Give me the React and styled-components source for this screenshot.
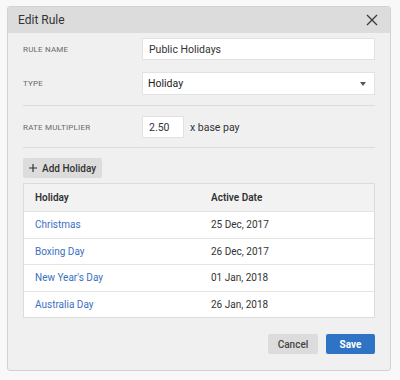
import React from 'react';
import styled, { createGlobalStyle } from 'styled-components';

const GlobalStyle = createGlobalStyle`
  html, body {
    margin: 0;
    padding: 0;
    background: #f8f8f8;
    font-family: Roboto, 'Noto Sans', sans-serif;
    color: #333;
  }
  * { box-sizing: border-box; }
`;

const Page = styled.div`
  padding: 6px 9px 0 7px;
`;

const Dialog = styled.div`
  width: 384px;
  background: #f0f0f0;
  border: 1px solid #d2d2d2;
  border-radius: 3px;
  overflow: hidden;
`;

const Header = styled.div`
  display: flex;
  align-items: center;
  justify-content: space-between;
  height: 26px;
  padding: 0 11px 0 10px;
  background: #dcdcdc;
  font-size: 12px;
  color: #333;
`;

const CloseButton = styled.button`
  display: flex;
  align-items: center;
  justify-content: center;
  width: 14px;
  height: 14px;
  padding: 0;
  border: none;
  background: none;
  cursor: pointer;
`;

const Body = styled.div`
  padding: 5px 15px 16px;
`;

const Section = styled.div`
  display: flex;
  flex-direction: column;
  gap: 12px;
  padding: ${p => p.$first ? '0 0 11px' : '10px 0 9px'};
  border-bottom: 1px solid #dcdcdc;
`;

const FieldRow = styled.div`
  display: grid;
  grid-template-columns: 119px 1fr;
  align-items: center;
  height: 22px;
`;

const Label = styled.div`
  font-size: 8px;
  letter-spacing: 0.2px;
  text-transform: uppercase;
  color: #6a6a6a;
`;

const TextInput = styled.div`
  display: flex;
  align-items: center;
  height: 22px;
  width: ${p => p.$width || '100%'};
  padding: 0 6px;
  background: #fff;
  border: 1px solid #e2e2e2;
  font-size: 10.5px;
  color: #333;
`;

const Select = styled(TextInput)`
  justify-content: space-between;
  padding: 0 8px 0 5px;
  height: 23px;
  color: #222;
`;

const Caret = styled.span`
  width: 0;
  height: 0;
  border-left: 3.5px solid transparent;
  border-right: 3.5px solid transparent;
  border-top: 4px solid #555;
`;

const InlineGroup = styled.div`
  display: flex;
  align-items: center;
  gap: 6px;
  font-size: 10.5px;
  color: #333;
`;

const AddButton = styled.button`
  display: inline-flex;
  align-items: center;
  gap: 5px;
  height: 20px;
  margin: 10px 0 5px;
  padding: 0 6px;
  border: none;
  border-radius: 2px;
  background: #dcdcdc;
  font-family: inherit;
  font-size: 10px;
  font-weight: 500;
  color: #333;
`;

const Table = styled.div`
  border: 1px solid #dcdcdc;
  background: #fff;
`;

const Row = styled.div`
  display: grid;
  grid-template-columns: 176px 1fr;
  align-items: center;
  height: ${p => p.$head ? '27px' : '26.5px'};
  padding: 0 11px;
  background: ${p => p.$head ? '#f2f2f2' : '#fff'};
  border-top: ${p => p.$head ? 'none' : '1px solid #e4e4e4'};
  font-size: 10px;
  font-weight: ${p => p.$head ? 600 : 400};
  color: #333;
`;

const HolidayLink = styled.a`
  color: #3b6fc2;
  text-decoration: none;
`;

const Footer = styled.div`
  display: flex;
  justify-content: flex-end;
  gap: 8px;
  margin-top: 16px;
`;

const Button = styled.button`
  height: 20px;
  width: ${p => p.$primary ? '49px' : '50px'};
  border: none;
  border-radius: 2px;
  background: ${p => p.$primary ? '#2f73c5' : '#dcdcdc'};
  color: ${p => p.$primary ? '#fff' : '#444'};
  font-family: inherit;
  font-size: 10px;
  font-weight: ${p => p.$primary ? 700 : 500};
`;

const holidays = [
  { name: 'Christmas', date: '25 Dec, 2017' },
  { name: 'Boxing Day', date: '26 Dec, 2017' },
  { name: "New Year's Day", date: '01 Jan, 2018' },
  { name: 'Australia Day', date: '26 Jan, 2018' },
];

export default function App() {
  return (
    <>
      <GlobalStyle />
      <Page>
        <Dialog>
          <Header>
            <span>Edit Rule</span>
            <CloseButton aria-label="Close">
              <svg width="12" height="12" viewBox="0 0 12 12">
                <path d="M1 1 L11 11 M11 1 L1 11" stroke="#3a3a3a" strokeWidth="1.3" />
              </svg>
            </CloseButton>
          </Header>
          <Body>
            <Section $first>
              <FieldRow>
                <Label>Rule Name</Label>
                <TextInput>Public Holidays</TextInput>
              </FieldRow>
              <FieldRow>
                <Label>Type</Label>
                <Select>
                  <span>Holiday</span>
                  <Caret />
                </Select>
              </FieldRow>
            </Section>
            <Section>
              <FieldRow>
                <Label>Rate Multiplier</Label>
                <InlineGroup>
                  <TextInput $width="42px">2.50</TextInput>
                  <span>x base pay</span>
                </InlineGroup>
              </FieldRow>
            </Section>
            <AddButton>
              <svg width="8" height="8" viewBox="0 0 8 8">
                <path d="M4 0 V8 M0 4 H8" stroke="#333" strokeWidth="1.2" />
              </svg>
              Add Holiday
            </AddButton>
            <Table>
              <Row $head>
                <span>Holiday</span>
                <span>Active Date</span>
              </Row>
              {holidays.map(h => (
                <Row key={h.name}>
                  <HolidayLink href="#">{h.name}</HolidayLink>
                  <span>{h.date}</span>
                </Row>
              ))}
            </Table>
            <Footer>
              <Button>Cancel</Button>
              <Button $primary>Save</Button>
            </Footer>
          </Body>
        </Dialog>
      </Page>
    </>
  );
}
